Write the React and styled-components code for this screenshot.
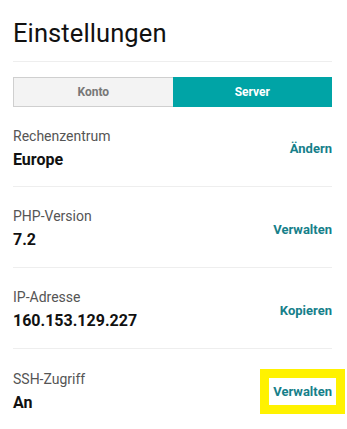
import React from "react";
import styled, { createGlobalStyle } from "styled-components";

const Global = createGlobalStyle`
  html, body { margin: 0; padding: 0; background: #fff; }
  body { font-family: Roboto, "Noto Sans", Arial, sans-serif; color: #111; }
`;

const Page = styled.div`
  width: 347px;
  box-sizing: border-box;
  padding: 0 15px 0 13px;
`;

const Title = styled.h1`
  margin: 0;
  padding: 18px 0 0;
  height: 45px;
  box-sizing: border-box;
  font-size: 25.5px;
  line-height: 30px;
  font-weight: 400;
  color: #111;
  letter-spacing: 0.1px;
`;

const Divider = styled.hr`
  margin: 16px 0 15px;
  border: 0;
  border-top: 1px solid #eee;
`;

const Tabs = styled.div`
  display: grid;
  grid-template-columns: 1fr 1fr;
  height: 30px;
`;

const Tab = styled.button`
  font-family: inherit;
  font-size: 12px;
  font-weight: 700;
  border: ${p => (p.$active ? "0" : "1px solid #cfcfcf")};
  border-right: 0;
  background: ${p => (p.$active ? "#00a4a6" : "#f3f3f3")};
  color: ${p => (p.$active ? "#fff" : "#777")};
  padding: 0;
  margin: 0;
`;

const Row = styled.div`
  display: flex;
  align-items: center;
  justify-content: space-between;
  height: ${p => (p.$first ? "80px" : "81px")};
  box-sizing: border-box;
  padding-top: 4px;
  border-bottom: ${p => (p.$last ? "0" : "1px solid #eee")};
`;

const Info = styled.div`
  display: flex;
  flex-direction: column;
  gap: 4px;
`;

const Label = styled.div`
  font-size: 14px;
  line-height: 18px;
  color: #555;
`;

const Value = styled.div`
  font-size: 16px;
  line-height: 22px;
  font-weight: 700;
  color: #111;
`;

const Action = styled.a`
  font-size: 13px;
  line-height: 17px;
  font-weight: 700;
  color: #16808a;
  text-decoration: none;
  ${p =>
    p.$highlight &&
    `
    background: #fff;
    outline: 9px solid #fff200;
    outline-offset: 4px;
    padding: 1px 0;
  `}
`;

const rows = [
  { label: "Rechenzentrum", value: "Europe", action: "Ändern" },
  { label: "PHP-Version", value: "7.2", action: "Verwalten" },
  { label: "IP-Adresse", value: "160.153.129.227", action: "Kopieren" },
  { label: "SSH-Zugriff", value: "An", action: "Verwalten", highlight: true },
];

export default function App() {
  return (
    <Page>
      <Global />
      <Title>Einstellungen</Title>
      <Divider />
      <Tabs>
        <Tab>Konto</Tab>
        <Tab $active>Server</Tab>
      </Tabs>
      {rows.map((r, i) => (
        <Row key={r.label} $first={i === 0} $last={i === rows.length - 1}>
          <Info>
            <Label>{r.label}</Label>
            <Value>{r.value}</Value>
          </Info>
          <Action href="#" $highlight={r.highlight}>{r.action}</Action>
        </Row>
      ))}
    </Page>
  );
}
